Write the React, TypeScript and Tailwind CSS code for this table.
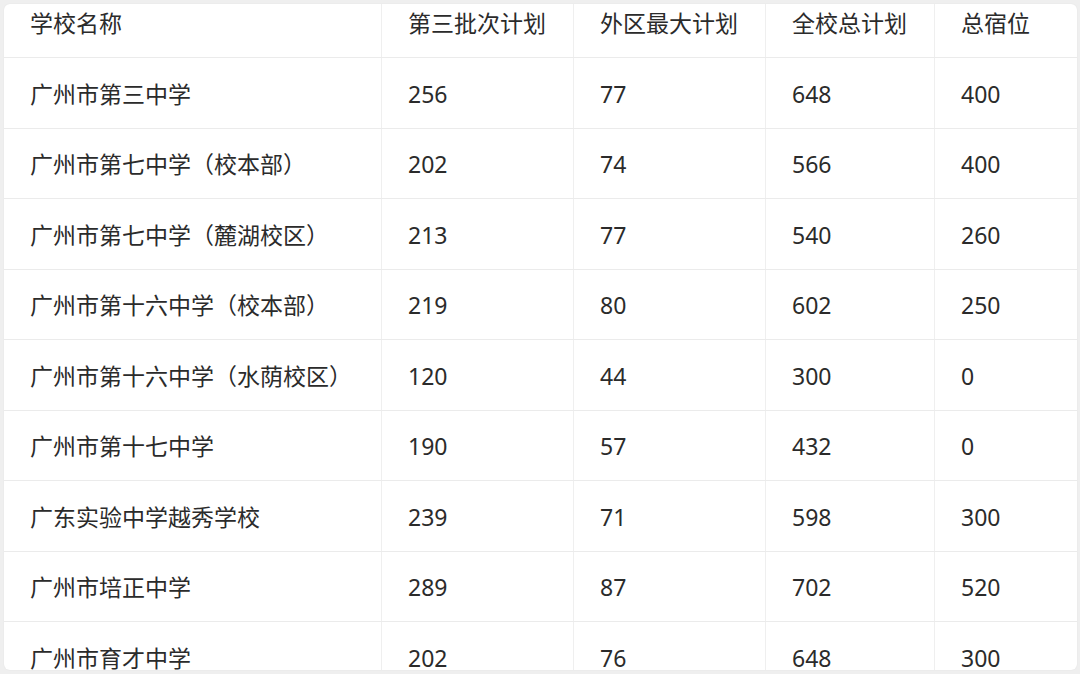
import React from "react";

const header = ["学校名称", "第三批次计划", "外区最大计划", "全校总计划", "总宿位"];
const rows: string[][] = [
  ["广州市第三中学", "256", "77", "648", "400"],
  ["广州市第七中学（校本部）", "202", "74", "566", "400"],
  ["广州市第七中学（麓湖校区）", "213", "77", "540", "260"],
  ["广州市第十六中学（校本部）", "219", "80", "602", "250"],
  ["广州市第十六中学（水荫校区）", "120", "44", "300", "0"],
  ["广州市第十七中学", "190", "57", "432", "0"],
  ["广东实验中学越秀学校", "239", "71", "598", "300"],
  ["广州市培正中学", "289", "87", "702", "520"],
  ["广州市育才中学", "202", "76", "648", "300"],
];

const cols = "grid grid-cols-[377px_192px_192px_169px_1fr]";

export default function App() {
  return (
    <div
      className="w-[1080px] h-[674px] bg-[#efefef] pt-[4px] pl-[4px] overflow-hidden"
      style={{ fontFamily: '"Noto Sans", "Noto Sans CJK SC", sans-serif' }}
    >
      <div className="w-[1073px] h-[666px] bg-white rounded-[6px] overflow-hidden shadow-[0_0_2px_rgba(0,0,0,0.06)] text-[#2b2b2b] text-[23px]">
        <div className={`${cols} h-[54px] border-b border-[#ebebeb]`}>
          {header.map((h, i) => (
            <div
              key={i}
              className={`pl-[26px] pt-[3px] leading-[32px] ${i > 0 ? "border-l border-[#efefef]" : ""}`}
            >
              {h}
            </div>
          ))}
        </div>
        {rows.map((r, ri) => (
          <div key={ri} className={`${cols} h-[70.5px] border-b border-[#ebebeb]`}>
            {r.map((c, i) => (
              <div
                key={i}
                className={`pl-[26px] pt-[2px] flex items-center ${i > 0 ? "border-l border-[#efefef]" : ""}`}
              >
                {c}
              </div>
            ))}
          </div>
        ))}
      </div>
    </div>
  );
}
